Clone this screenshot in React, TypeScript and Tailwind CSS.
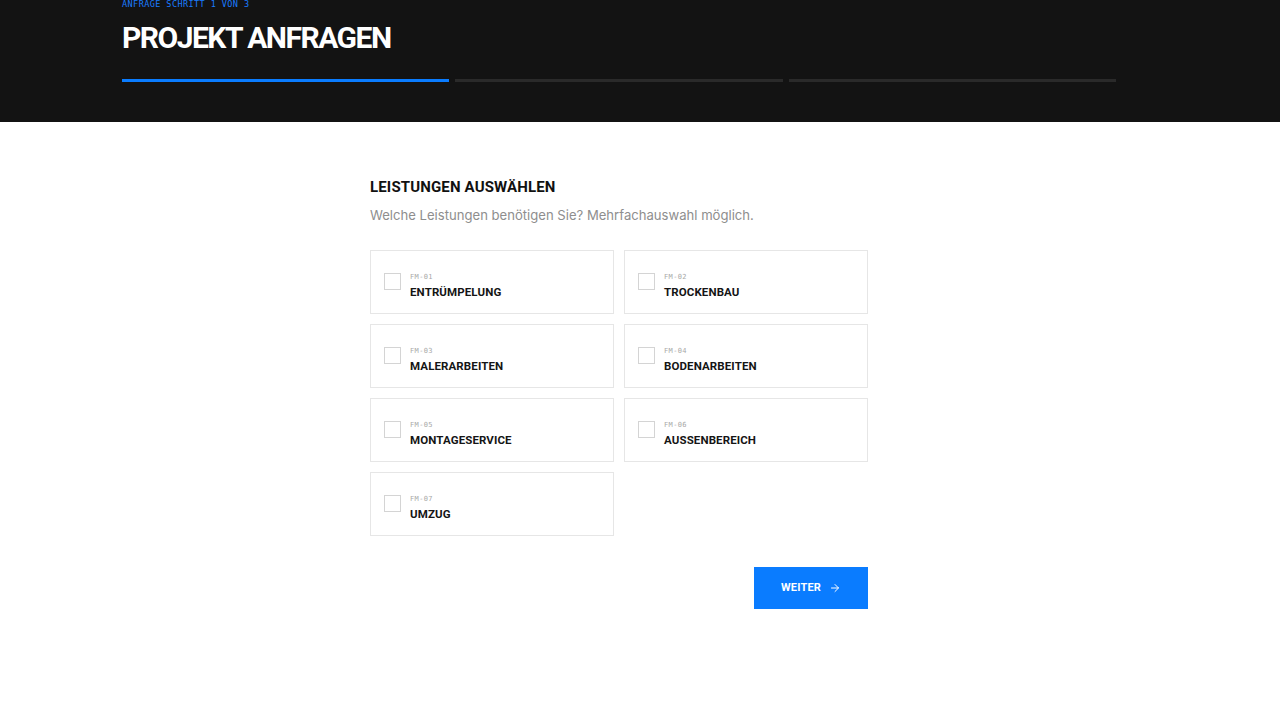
import { ArrowRight } from 'lucide-react';

const services = [
    { code: 'FM-01', name: 'ENTRÜMPELUNG' },
    { code: 'FM-02', name: 'TROCKENBAU' },
    { code: 'FM-03', name: 'MALERARBEITEN' },
    { code: 'FM-04', name: 'BODENARBEITEN' },
    { code: 'FM-05', name: 'MONTAGESERVICE' },
    { code: 'FM-06', name: 'AUSSENBEREICH' },
    { code: 'FM-07', name: 'UMZUG' },
];

export default function App() {
    return (
        <div className="min-h-[720px] bg-white font-['Inter',sans-serif]">
            {/* Header */}
            <div className="h-[122px] bg-[#131313]">
                <div className="ml-[122px] w-[994px]">
                    <div className="h-[8px] font-['DejaVu_Sans_Mono',monospace] text-[8.5px] leading-[8px] tracking-[0.05em] text-[#1a7cff]">
                        ANFRAGE SCHRITT 1 VON 3
                    </div>
                    <h1 className="mt-[15px] font-['Roboto',sans-serif] text-[30px] font-bold leading-[30px] tracking-[-0.05em] text-white">
                        PROJEKT ANFRAGEN
                    </h1>
                    <div className="mt-[26px] flex gap-[6px]">
                        <div className="h-[3px] flex-1 bg-[#0a7cff]" />
                        <div className="h-[3px] flex-1 bg-[#2a2a2a]" />
                        <div className="h-[3px] flex-1 bg-[#2a2a2a]" />
                    </div>
                </div>
            </div>

            {/* Form */}
            <div className="ml-[370px] w-[498px] pt-[55px]">
                <h2 className="font-['Roboto',sans-serif] text-[15px] font-bold leading-[20px] tracking-[0.01em] text-[#111]">
                    LEISTUNGEN AUSWÄHLEN
                </h2>
                <p className="mt-[8px] text-[13.1px] leading-[20px] text-[#8e8e8e]">
                    Welche Leistungen benötigen Sie? Mehrfachauswahl möglich.
                </p>

                <div className="mt-[25px] grid grid-cols-2 gap-[10px]">
                    {services.map((s) => (
                        <label
                            key={s.code}
                            className="flex h-[64px] cursor-pointer items-start gap-[9px] border border-[#e6e6e6] bg-white pl-[13px] pt-[22px]"
                        >
                            <span className="block h-[17px] w-[17px] border border-[#d4d4d4] bg-white" />
                            <span className="flex flex-col">
                                <span className="font-['DejaVu_Sans_Mono',monospace] text-[7px] leading-[8px] tracking-[0.05em] text-[#a8a8a8]">
                                    {s.code}
                                </span>
                                <span className="mt-[4px] font-['Roboto',sans-serif] text-[11.5px] font-bold leading-[14px] tracking-[0.01em] text-[#151515]">
                                    {s.name}
                                </span>
                            </span>
                        </label>
                    ))}
                </div>

                <div className="mt-[31px] flex justify-end">
                    <button className="flex h-[42px] w-[114px] items-center justify-center gap-[8px] bg-[#0a7cff] font-['Roboto',sans-serif] text-[11px] font-bold tracking-[0.02em] text-white">
                        WEITER
                        <ArrowRight size={12} strokeWidth={2} />
                    </button>
                </div>
            </div>
        </div>
    );
}
